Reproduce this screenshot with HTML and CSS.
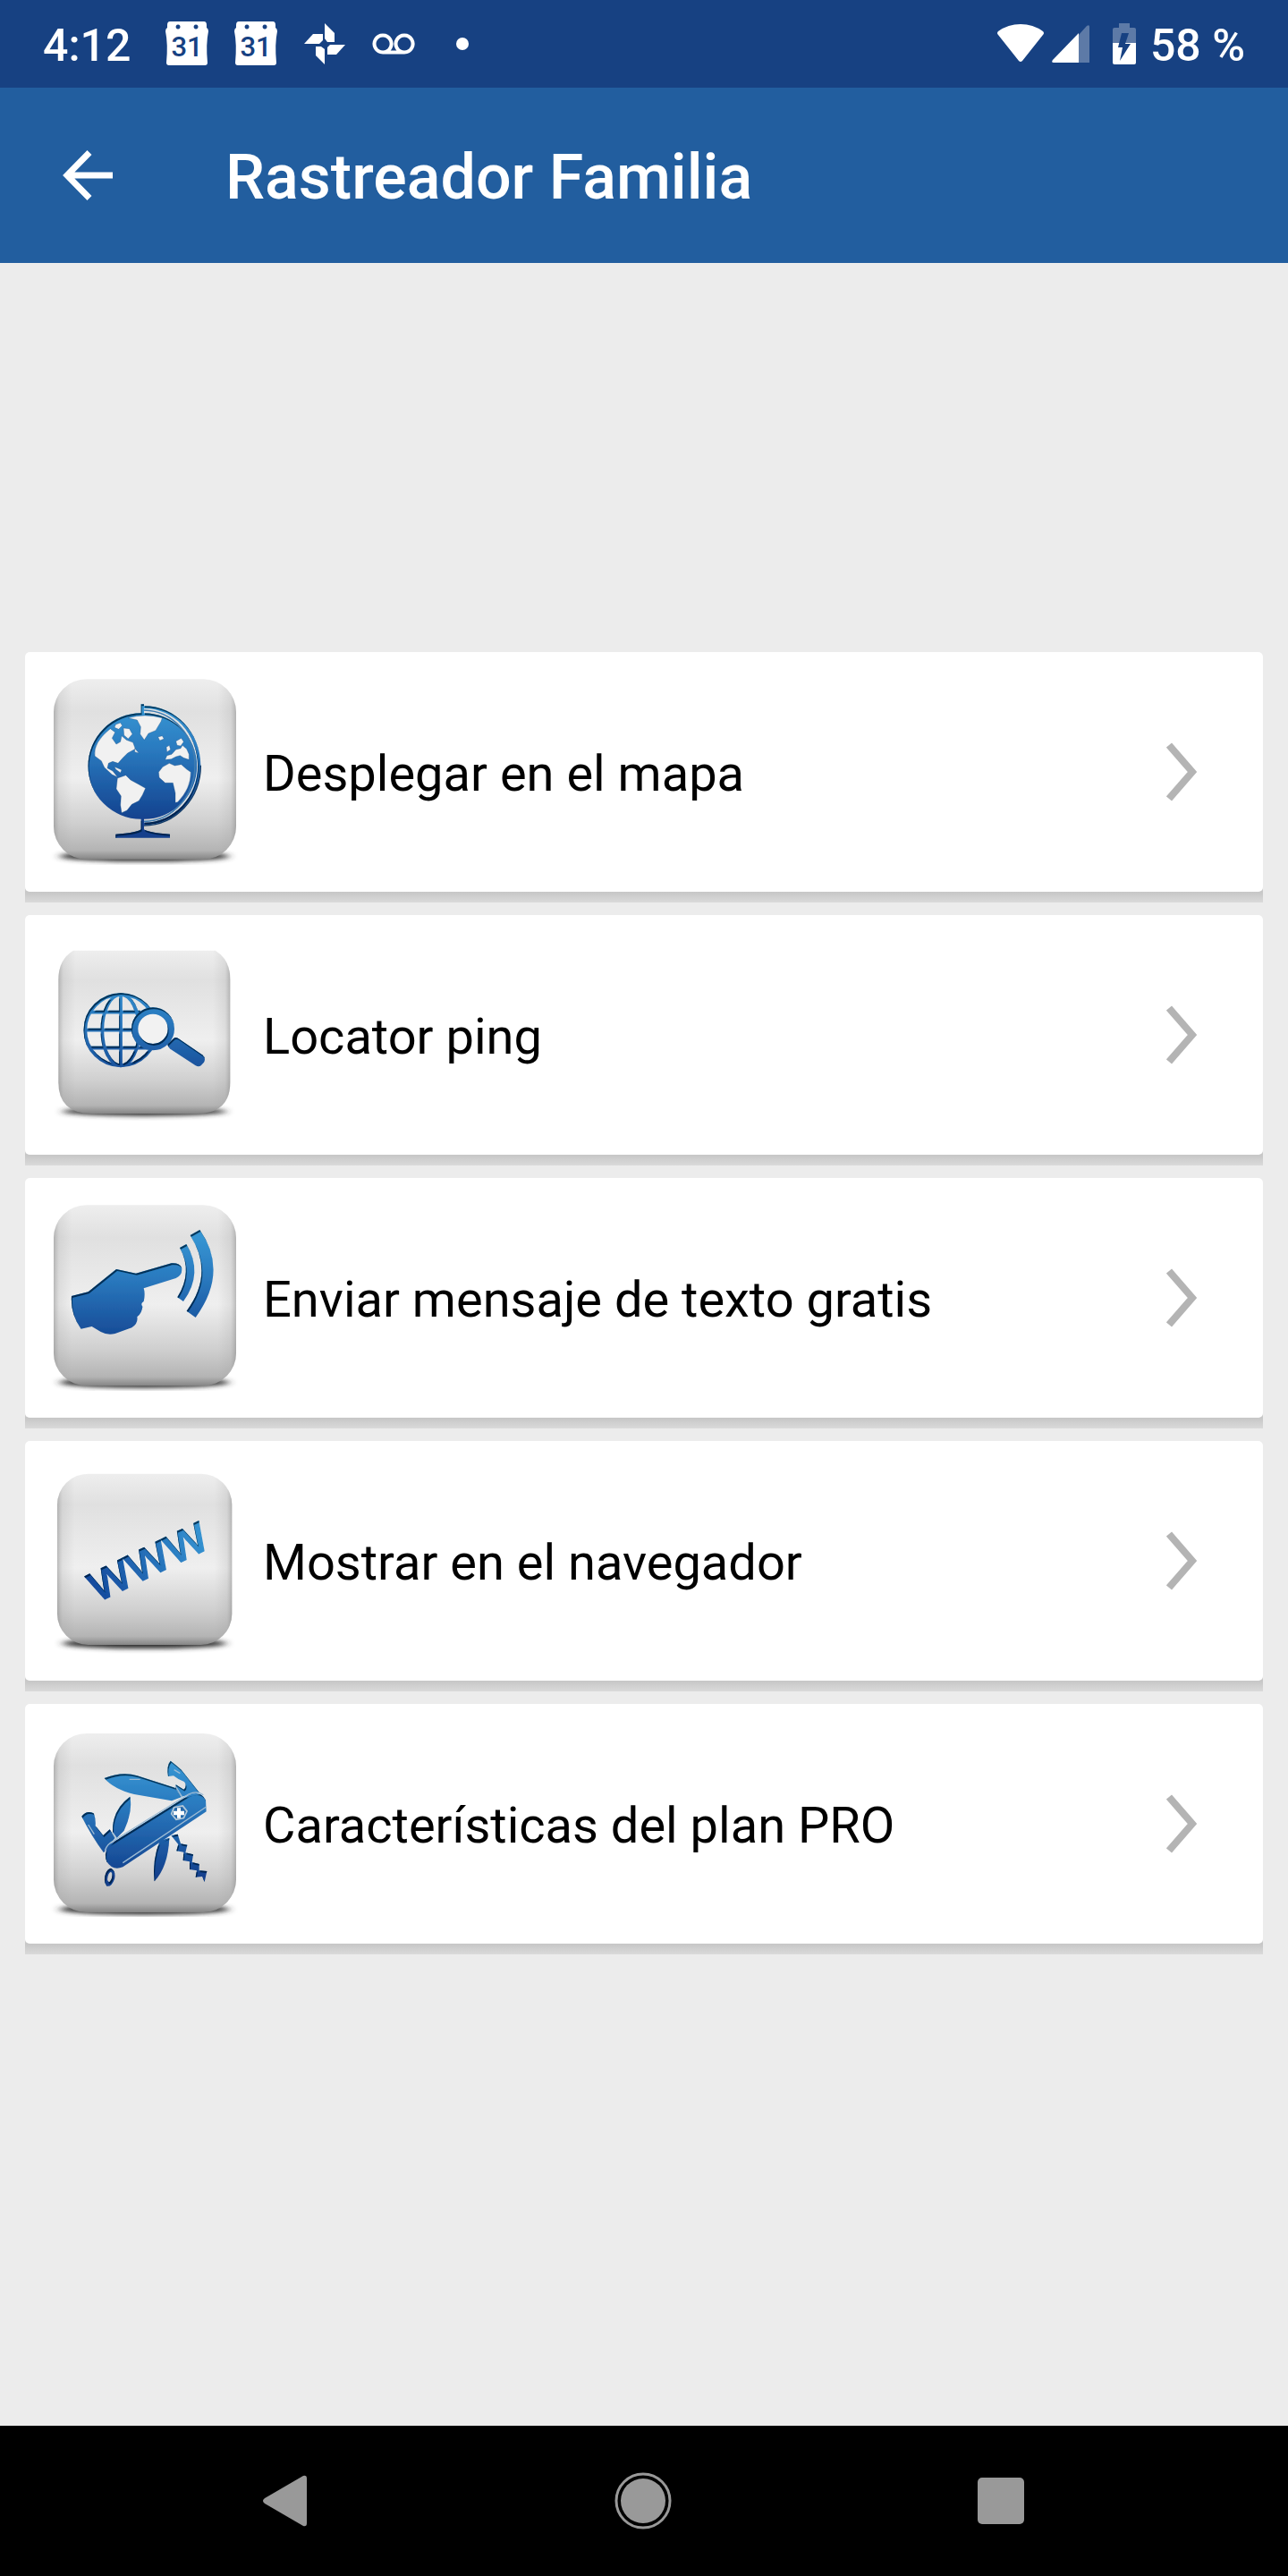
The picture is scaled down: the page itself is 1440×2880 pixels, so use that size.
FILE: index.html
```html
<!DOCTYPE html>
<html lang="es">
<head>
    <meta charset="UTF-8">
    <meta name="viewport" content="width=device-width, initial-scale=1.0">
    <link rel="stylesheet" href="styles.css">
    <title>Rastreador Familia</title>
</head>
<body>
    <!-- Shared gradients and filters for the menu icons -->
    <svg class="defs" aria-hidden="true">
        <defs>
            <linearGradient id="tile" x1="0" y1="0" x2="0" y2="1">
                <stop offset="0" stop-color="#eeeeee"/>
                <stop offset="0.18" stop-color="#e0e0e0"/>
                <stop offset="0.55" stop-color="#efefef"/>
                <stop offset="0.8" stop-color="#cfcfcf"/>
                <stop offset="0.95" stop-color="#b4b4b4"/>
                <stop offset="1" stop-color="#858585"/>
            </linearGradient>
            <linearGradient id="side" x1="0" y1="0" x2="1" y2="0">
                <stop offset="0" stop-color="#777" stop-opacity="0.45"/>
                <stop offset="0.03" stop-color="#999" stop-opacity="0.18"/>
                <stop offset="0.1" stop-color="#999" stop-opacity="0"/>
                <stop offset="0.9" stop-color="#999" stop-opacity="0"/>
                <stop offset="0.97" stop-color="#999" stop-opacity="0.18"/>
                <stop offset="1" stop-color="#777" stop-opacity="0.45"/>
            </linearGradient>
            <linearGradient id="blue" gradientUnits="userSpaceOnUse" x1="0" y1="220" x2="0" y2="600">
                <stop offset="0" stop-color="#3594d2"/>
                <stop offset="0.35" stop-color="#2a7abf"/>
                <stop offset="1" stop-color="#123f8c"/>
            </linearGradient>
            <linearGradient id="blue-text" x1="0" y1="0" x2="1" y2="0">
                <stop offset="0" stop-color="#15489c"/>
                <stop offset="1" stop-color="#3594d2"/>
            </linearGradient>
            <filter id="soft" x="-20%" y="-100%" width="140%" height="300%">
                <feGaussianBlur stdDeviation="14 8"/>
            </filter>
            <!-- dark inner edge on the top left, makes the shapes look pressed in -->
            <filter id="press" x="-10%" y="-10%" width="120%" height="120%">
                <feOffset in="SourceAlpha" dx="4" dy="6" result="moved"/>
                <feGaussianBlur in="moved" stdDeviation="2" result="blurred"/>
                <feFlood flood-color="#062040" flood-opacity="0.9"/>
                <feComposite in2="SourceAlpha" operator="in"/>
                <feComposite in2="blurred" operator="out" result="edge"/>
                <feMerge>
                    <feMergeNode in="SourceGraphic"/>
                    <feMergeNode in="edge"/>
                </feMerge>
            </filter>
        </defs>
    </svg>

    <div class="status-bar">
        <div class="status-left">
            <span class="time">4:12</span>
            <svg width="48" height="50" viewBox="0 0 48 50">
                <path fill="#fff" fill-rule="evenodd" d="M5 0H43Q46 0 46 4V7Q48 8 48 11Q45 25 47 46Q47 49 44 49H4Q1 49 1 46Q3 25 0 11Q0 8 2 7V4Q2 0 5 0ZM14 3.500a2.500 2.500 0 1 0 .1 0ZM34 3.500a2.500 2.500 0 1 0 .1 0Z"/>
                <text class="day" x="24" y="39">31</text>
            </svg>
            <svg width="48" height="50" viewBox="0 0 48 50">
                <path fill="#fff" fill-rule="evenodd" d="M5 0H43Q46 0 46 4V7Q48 8 48 11Q45 25 47 46Q47 49 44 49H4Q1 49 1 46Q3 25 0 11Q0 8 2 7V4Q2 0 5 0ZM14 3.500a2.500 2.500 0 1 0 .1 0ZM34 3.500a2.500 2.500 0 1 0 .1 0Z"/>
                <text class="day" x="24" y="39">31</text>
            </svg>
            <svg width="48" height="48" viewBox="0 0 48 48">
                <g fill="#fff">
                    <path d="M24 1L35 12V22H27L24 18Z"/>
                    <path d="M47 25L37 36H27V28L30 25Z"/>
                    <path d="M24 47L14 37V27H20L24 30Z"/>
                    <path d="M1 24L11 13H22V20L18 24Z"/>
                </g>
            </svg>
            <svg width="48" height="24" viewBox="0 0 48 24">
                <path fill="none" stroke="#fff" stroke-width="4" d="M12 21.500H36M12 2.500a9.500 9.500 0 1 0 .1 0ZM36 2.500a9.500 9.500 0 1 0 .1 0Z"/>
            </svg>
            <svg width="48" height="16" viewBox="0 0 48 16">
                <circle cx="24" cy="8" r="7" fill="#fff"/>
            </svg>
        </div>
        <div class="status-right">
            <svg width="54" height="46" viewBox="0 0 54 46">
                <path fill="#fff" d="M2 9Q13 1 27 1T52 9Q54 11 52 13L29 42Q27 44 25 42L2 13Q0 11 2 9Z"/>
            </svg>
            <svg class="signal" width="42" height="44" viewBox="0 0 42 44">
                <path fill="#fff" fill-opacity="0.300" d="M30 12L39 2Q42 0 42 3V43H30Z"/>
                <path fill="#fff" d="M30 10V43H2Q-1 43 1 40Z"/>
            </svg>
            <svg width="26" height="46" viewBox="0 0 26 46">
                <path fill="#fff" fill-opacity="0.300" d="M7 0H19V5H24Q26 5 26 7V22H0V7Q0 5 2 5H7Z"/>
                <path fill="#fff" d="M0 22H26V44Q26 46 24 46H2Q0 46 0 44Z"/>
                <path fill="#174182" d="M10 11H18L14 23H20L8 42L11 27H6Z"/>
            </svg>
            <span>58 %</span>
        </div>
    </div>

    <header>
        <a class="back" href="#" aria-label="Volver">
            <svg width="56" height="56" viewBox="0 0 56 56">
                <path fill="none" stroke="#fff" stroke-width="7" d="M56 28H6M30 2.500L5 28L30 53.500"/>
            </svg>
        </a>
        <h1>Rastreador Familia</h1>
    </header>

    <main>
        <ul class="menu">
            <li>
                <a class="card" href="#">
                    <svg class="icon" viewBox="108 117 630 624">
                        <ellipse class="ground" cx="424" cy="712" rx="286" ry="18"/>
                        <rect class="tile" x="120" y="118" width="612" height="604" rx="110"/>
                        <rect class="side" x="120" y="118" width="612" height="604" rx="110"/>
                        <g class="shape">
                            <path fill-rule="evenodd" d="M413 202H423V208C530 208 613 298 613 407S530 607 423 607V622Q440 634 510 638V650H328V638Q398 634 413 622V587A177 177 0 0 1 413 232ZM423 216V232A177 177 0 0 1 423 587V599C525 599 603 512 603 407S525 216 423 216Z"/>
                        </g>
                        <path fill="none" stroke="#3f7db3" stroke-width="5" d="M423 222C520 224 594 308 594 407S520 594 423 595"/>
                        <path fill="none" stroke="#123a66" stroke-width="4" d="M423 609C530 607 613 518 613 407"/>
                        <g class="land">
                            <path d="M370 248L400 255 412 278 410 302 424 322 438 300 462 290 480 260 484 248Q425 232 370 248Z"/>
                            <path d="M328 270L344 264 350 274 338 286 324 280ZM354 282L374 284 384 302 370 318 356 306Z"/>
                            <path d="M310 284L326 296 316 316 330 336 344 328 348 308 364 322 386 330 394 352 368 366 352 382 336 400 318 394 304 400 300 416 318 426 334 446 316 438 290 414 280 392 258 376Q252 330 310 284Z"/>
                            <path d="M334 450L362 440 378 456 404 470 428 484 418 506 406 526 382 538 366 558 348 566 344 540 346 510 330 486Z"/>
                            <path d="M486 412L508 400 526 408 548 404 566 420 580 430Q580 486 536 530L528 532 528 500 520 466 494 466 474 448 472 430Z"/>
                            <path d="M494 388L500 374 516 370 530 354 546 350 552 340 566 352 574 370 574 388 556 382 544 374 530 378 514 386ZM530 326L548 316 556 328 546 342 534 340ZM498 346L508 340 512 354 500 362ZM470 312L484 308 490 318 476 324Z"/>
                            <path d="M392 350L406 366 392 362ZM324 412L348 422 344 432 328 420Z"/>
                        </g>
                    </svg>
                    <span class="label">Desplegar en el mapa</span>
                    <svg class="chevron" width="34" height="66" viewBox="0 0 34 66"><path d="M3 3L29 33L3 63"/></svg>
                </a>
            </li>
            <li>
                <a class="card" href="#">
                    <svg class="icon" viewBox="108 99 630 624">
                        <ellipse class="ground" cx="424" cy="668" rx="276" ry="15"/>
                        <path class="tile" d="M186 128H662Q712 158 712 225V570Q712 675 600 675H248Q136 675 136 570V225Q136 158 186 128Z"/>
                        <path class="side" d="M186 128H662Q712 158 712 225V570Q712 675 600 675H248Q136 675 136 570V225Q136 158 186 128Z"/>
                        <g class="shape-line">
                            <circle cx="345" cy="395" r="119"/>
                            <ellipse cx="345" cy="395" rx="62" ry="119"/>
                            <path d="M345 276V514M226 395H400M246 335H410M246 455H440"/>
                        </g>
                        <circle cx="453" cy="391" r="60" fill="#f2f2f2"/>
                        <g class="shape-line">
                            <circle class="lens" cx="453" cy="391" r="61"/>
                        </g>
                        <g class="shape">
                            <path d="M503 442L523 422Q530 418 538 423L618 478Q632 489 624 503L614 514Q606 520 596 514L511 458Q501 450 503 442Z"/>
                        </g>
                    </svg>
                    <span class="label">Locator ping</span>
                    <svg class="chevron" width="34" height="66" viewBox="0 0 34 66"><path d="M3 3L29 33L3 63"/></svg>
                </a>
            </li>
            <li>
                <a class="card" href="#">
                    <svg class="icon" viewBox="108 110 630 624">
                        <ellipse class="ground" cx="424" cy="706" rx="286" ry="18"/>
                        <rect class="tile" x="120" y="111" width="612" height="606" rx="110"/>
                        <rect class="side" x="120" y="111" width="612" height="606" rx="110"/>
                        <g class="shape">
                            <path d="M180 416L236 402 330 326 396 340 515 306Q542 304 549 320Q554 346 530 356L422 390Q428 410 422 434Q410 440 418 452Q416 474 400 486Q404 508 382 522L326 542Q300 548 278 536L248 518 212 526Q176 476 180 416Z"/>
                            <path d="M543 254L565 242Q624 340 555 434L535 420Q588 336 543 254Z"/>
                            <path d="M578 212L610 194Q708 334 596 488L566 466Q660 340 578 212Z"/>
                        </g>
                    </svg>
                    <span class="label">Enviar mensaje de texto gratis</span>
                    <svg class="chevron" width="34" height="66" viewBox="0 0 34 66"><path d="M3 3L29 33L3 63"/></svg>
                </a>
            </li>
            <li>
                <a class="card" href="#">
                    <svg class="icon" viewBox="108 123 630 624">
                        <ellipse class="ground" cx="424" cy="712" rx="276" ry="18"/>
                        <rect class="tile" x="132" y="143" width="586" height="574" rx="104"/>
                        <rect class="side" x="132" y="143" width="586" height="574" rx="104"/>
                        <g class="shape">
                            <text class="www" transform="translate(266 576) rotate(-26)">www</text>
                        </g>
                    </svg>
                    <span class="label">Mostrar en el navegador</span>
                    <svg class="chevron" width="34" height="66" viewBox="0 0 34 66"><path d="M3 3L29 33L3 63"/></svg>
                </a>
            </li>
            <li>
                <a class="card" href="#">
                    <svg class="icon" viewBox="108 105 630 624">
                        <ellipse class="ground" cx="424" cy="704" rx="286" ry="18"/>
                        <rect class="tile" x="120" y="114" width="612" height="600" rx="110"/>
                        <rect class="side" x="120" y="114" width="612" height="600" rx="110"/>
                        <g class="shape">
                            <path d="M290 264Q350 240 400 256L526 296 548 328 516 340 390 318Q320 300 290 264Z"/>
                            <path d="M512 206Q530 220 548 236L608 312 548 326 528 300 530 286 556 302Q570 290 558 276Q536 268 522 256L504 258Q498 222 512 206Z"/>
                            <path d="M376 326Q386 376 356 440L332 464 318 444Q316 370 376 326Z"/>
                            <path d="M214 392Q230 370 254 382Q262 400 260 424L286 456 308 436 326 464 288 514Q246 456 214 392Z"/>
                            <path d="M476 474L508 464Q504 560 458 610Q450 540 476 474Z"/>
                            <path d="M514 456L536 452 546 484 568 488 562 514 588 520 584 546 608 552 608 574 634 576 626 612 618 594 596 596 600 574 576 570 576 544 554 540 556 512 532 508 538 486Z"/>
                            <path fill-rule="evenodd" d="M312 566Q330 576 324 602Q314 630 298 626Q286 610 294 586Q300 568 312 566ZM312 578Q302 582 300 604Q304 622 314 602Q320 584 312 578Z"/>
                            <path d="M302 490L572 322Q612 302 630 338L632 376 352 562Q318 576 298 544Q288 516 302 490Z"/>
                        </g>
                        <path fill="none" stroke="#9dbbd4" stroke-width="4" d="M292 506Q300 484 324 472L572 318Q602 304 622 320M632 360L352 548M528 290L550 326M316 446L328 466M236 420L256 452M524 236L544 248M374 268L410 268"/>
                        <path fill="#b4c8d8" d="M522 360L554 354 570 374 558 400 530 406 512 384Z"/>
                        <path fill="#2468aa" d="M526 364L552 360 564 376 554 396 532 400 518 384Z"/>
                        <path fill="#fff" d="M534 364H546V374H558V388H546V398H534V388H522V374H534Z"/>
                    </svg>
                    <span class="label">Características del plan PRO</span>
                    <svg class="chevron" width="34" height="66" viewBox="0 0 34 66"><path d="M3 3L29 33L3 63"/></svg>
                </a>
            </li>
        </ul>
    </main>

    <nav class="nav-bar">
        <button type="button" aria-label="Atrás">
            <svg width="52" height="58" viewBox="0 0 52 58"><path fill="#999" d="M46 1Q50 0 50 4V54Q50 58 46 57L3 32Q-1 29 3 26Z"/></svg>
        </button>
        <button type="button" aria-label="Inicio">
            <svg width="64" height="64" viewBox="0 0 64 64">
                <circle cx="32" cy="32" r="30" fill="none" stroke="#999" stroke-width="3"/>
                <circle cx="32" cy="32" r="25" fill="#999"/>
            </svg>
        </button>
        <button type="button" aria-label="Recientes">
            <svg width="52" height="52" viewBox="0 0 52 52"><rect width="52" height="52" rx="5" fill="#999"/></svg>
        </button>
    </nav>
</body>
</html>
```
FILE: styles.css
```css
* {
    box-sizing: border-box;
}

body {
    font-family: Roboto, "Liberation Sans", sans-serif;
    background-color: #ececec;
    margin: 0;
    min-height: 100vh;
    display: flex;
    flex-direction: column;
}

svg {
    display: block;
    flex-shrink: 0;
}

.defs {
    position: absolute;
    width: 0;
    height: 0;
}

/* Status bar */
.status-bar {
    display: flex;
    justify-content: space-between;
    height: 98px;
    padding: 0 48px;
    background-color: #174182;
    color: #fff;
    font-size: 50px;
    font-weight: 500;
}

.status-bar span {
    padding-top: 4px;
}

.status-left, .status-right {
    display: flex;
    align-items: center;
}

.status-left {
    gap: 29px;
}

.time {
    margin-right: 10px;
}

.day {
    font-size: 31px;
    font-weight: 500;
    text-anchor: middle;
    fill: #174182;
}

.status-right {
    gap: 16px;
}

.signal {
    margin: 0 10px 0 -8px;
}

/* Title bar */
header {
    display: flex;
    align-items: center;
    height: 196px;
    padding: 0 70px;
    background-color: #225e9f;
    color: #fff;
}

.back {
    margin-right: 126px;
}

h1 {
    margin: 0;
    padding-top: 4px;
    font-size: 70px;
    font-weight: 500;
}

/* Menu */
main {
    flex: 1;
    padding: 435px 28px 0;
}

.menu {
    margin: 0;
    padding: 0;
    list-style: none;
    display: flex;
    flex-direction: column;
    gap: 14px;
}

.menu li {
    padding-bottom: 12px;
    border-radius: 5px 5px 0 0;
    background: linear-gradient(to top, #dadada, #c6c6c6 12px, #dcdcdc 20px);
}

.card {
    display: flex;
    align-items: center;
    height: 268px;
    padding: 0 74px 0 28px;
    border-radius: 5px;
    background-color: #fff;
    color: #000;
    font-size: 56px;
    text-decoration: none;
}

.icon {
    width: 210px;
    height: 208px;
    margin-right: 28px;
}

.label {
    flex: 1;
    padding-top: 4px;
}

.tile {
    fill: url(#tile);
}

.side {
    fill: url(#side);
}

.ground {
    fill: #333;
    filter: url(#soft);
}

.shape {
    fill: url(#blue);
    filter: url(#press);
}

.shape-line {
    fill: none;
    stroke: url(#blue);
    stroke-width: 11px;
    filter: url(#press);
}

.lens {
    stroke-width: 22px;
}

.land {
    fill: #f1f1f1;
    stroke: #154a80;
    stroke-width: 1px;
}

.www {
    font-family: "Noto Sans", sans-serif;
    font-size: 181px;
    fill: url(#blue-text);
    stroke: url(#blue-text);
    stroke-width: 4px;
}

.chevron {
    fill: none;
    stroke: #b4b4b4;
    stroke-width: 8px;
}

/* Bottom navigation */
.nav-bar {
    display: grid;
    grid-template-columns: repeat(3, 1fr);
    height: 168px;
    padding: 0 121px 0 119px;
    background-color: #000;
}

.nav-bar button {
    display: flex;
    align-items: center;
    justify-content: center;
    padding: 0;
    border: none;
    background: none;
    cursor: pointer;
}
```
